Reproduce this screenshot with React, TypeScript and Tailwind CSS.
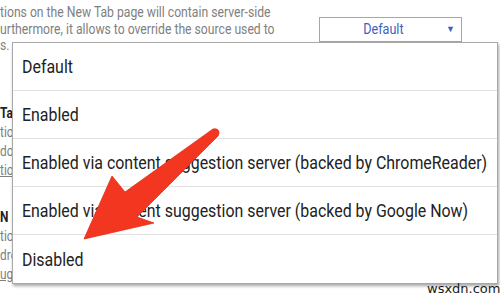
export default function App() {
  const options = [
    "Default",
    "Enabled",
    "Enabled via content suggestion server (backed by ChromeReader)",
    "Enabled via content suggestion server (backed by Google Now)",
    "Disabled",
  ];

  return (
    <div className="relative w-[500px] h-[296px] overflow-hidden bg-white font-['Roboto',sans-serif]">
      {/* page behind the menu */}
      <div className="text-[14px] leading-[16.5px] text-[#808080] pt-[4px] origin-left scale-x-[0.87]">
        <p>tions on the New Tab page will contain server-side</p>
        <p>urthermore, it allows to override the source used to</p>
        <p>s.</p>
      </div>
      <div className="absolute left-[319px] top-[17px] w-[143px] h-[25px] border border-[#c9a068] flex items-center text-[14px] text-[#3d5fc4]">
        <span className="flex-1 text-center">
          <span className="inline-block scale-x-[0.9]">Default</span>
        </span>
        <span className="text-[9px] pr-[6px]">▼</span>
      </div>
      <div className="mt-[50px] text-[14px] leading-[19px] text-[#808080] origin-left scale-x-[0.85]">
        <p className="font-bold text-[#222]">Tab</p>
        <p>tio</p>
        <p>do</p>
        <p className="underline">tio</p>
        <p className="mt-[28px] font-bold text-[#222]">N</p>
        <p>tio</p>
        <p>dro</p>
        <p className="underline">ug</p>
      </div>

      {/* open dropdown menu */}
      <div className="absolute left-[12px] top-[42px] w-[486px] bg-white border border-[#a9a9a9] shadow-[1px_2px_3px_rgba(0,0,0,0.35)]">
        {options.map((o, i) => (
          <div
            key={o}
            className={`h-[48px] flex items-center pl-[9px] text-[18px] text-[#222] whitespace-nowrap ${
              i < options.length - 1 ? "border-b border-[#e2e2e2]" : ""
            }`}
          >
            <span className="inline-block origin-left scale-x-[0.885]">{o}</span>
          </div>
        ))}
      </div>

      {/* red annotation arrow */}
      <svg className="absolute left-0 top-0" width="500" height="296" viewBox="0 0 500 296">
        <path
          d="M84 239 L112 176 L125 192 L213 129 Q219 128 219 133 Q219 136 216 138 L137 217 L154 223 Z"
          fill="#f3361f"
          stroke="#e62a15"
          strokeWidth="0.8"
          strokeLinejoin="round"
        />
      </svg>

      <div className="absolute left-[427px] top-[279px] text-[13px] text-[#1a1a1a] font-['DejaVu_Sans',sans-serif]">
        wsxdn.com
      </div>
    </div>
  );
}
